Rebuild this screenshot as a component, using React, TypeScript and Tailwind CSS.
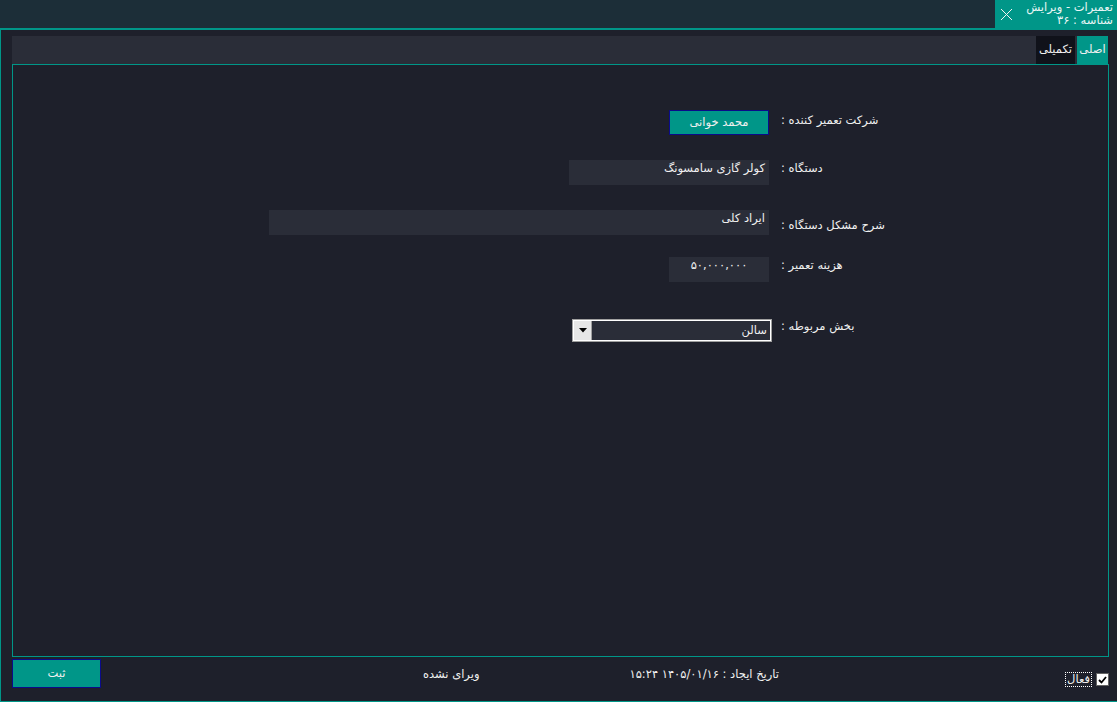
import React from 'react';

// فرم ویرایش تعمیرات
const teal = 'bg-[#009688]';

const Field = ({ width, children, className = '' }: { width: string; children?: React.ReactNode; className?: string }) => (
  <div dir="rtl" className={`${width} h-[25px] bg-[#2a2d38] px-[4px] pt-[1px] text-[11.5px] leading-[15px] text-[#f0f0f0] ${className}`}>
    {children}
  </div>
);

const Row = ({ top, labelTop, label, children }: { top: string; labelTop: string; label: string; children: React.ReactNode }) => (
  <div className={`flex items-start ${top}`}>
    <div className="w-[756px] flex justify-end">{children}</div>
    <div dir="rtl" className={`ml-[12px] ${labelTop} text-[11.5px] leading-[15px] text-[#f0f0f0] whitespace-nowrap`}>
      {label}
    </div>
  </div>
);

const App = () => {
  return (
    <div
      className="w-[1117px] h-[702px] flex flex-col bg-[#1e202b] overflow-hidden"
      style={{ fontFamily: '"DejaVu Sans", sans-serif' }}
    >
      {/* نوار عنوان */}
      <div className="h-[28px] flex justify-end bg-[#1c2e38] shrink-0">
        <div className={`${teal} w-[122px] h-full flex items-center justify-between pl-[5px] pr-[4px]`}>
          <svg width="13" height="13" viewBox="0 0 13 13" className="mt-[1px]">
            <path d="M1 1 L12 12 M12 1 L1 12" stroke="#f2f2f2" strokeWidth="1" fill="none" />
          </svg>
          <div dir="rtl" className="text-[11.5px] leading-[13px] text-[#eaf7f6] text-right">
            <div>تعمیرات - ویرایش</div>
            <div>شناسه : ۳۶</div>
          </div>
        </div>
      </div>
      <div className="h-[2px] bg-[#009688] shrink-0" />

      {/* بدنه */}
      <div className="flex-1 flex flex-col border-l border-b border-[#009688] pl-[11px] pt-[6px]">
        {/* تب ها */}
        <div className="w-[1096px] h-[28px] bg-[#2a2d38] flex justify-end">
          <div className="h-full px-[3px] bg-[#10121a] flex items-center text-[11.5px] text-[#f0f0f0]">تکمیلی</div>
          <div className={`${teal} h-full w-[31px] ml-[2px] flex items-center justify-center text-[11.5px] text-[#f0f0f0]`}>اصلی</div>
        </div>

        {/* محتوای تب */}
        <div className="w-[1097px] h-[593px] border border-[#009688] flex flex-col">
          <Row top="mt-[45px]" labelTop="mt-[3px]" label="شرکت تعمیر کننده :">
            <div className={`${teal} w-[100px] h-[25px] border border-[#0b0b8a] flex items-center justify-center text-[11.5px] text-[#f0f0f0]`}>
              محمد خوانی
            </div>
          </Row>
          <Row top="mt-[25px]" labelTop="mt-[1px]" label="دستگاه :">
            <Field width="w-[200px]">کولر گازی سامسونگ</Field>
          </Row>
          <Row top="mt-[25px]" labelTop="mt-[8px]" label="شرح مشکل دستگاه :">
            <Field width="w-[500px]">ایراد کلی</Field>
          </Row>
          <Row top="mt-[22px]" labelTop="mt-[1px]" label="هزینه تعمیر :">
            <Field width="w-[100px]" className="text-center">۵۰,۰۰۰,۰۰۰</Field>
          </Row>
          <Row top="mt-[37px]" labelTop="mt-[0px]" label="بخش مربوطه :">
            <div className="w-[200px] h-[23px] -mr-[3px] border border-[#a0a0a0] flex">
              <div className="flex-1 flex border border-white">
                <div className="w-[18px] bg-[#e6e6e6] border-r border-[#a0a0a0] flex items-center justify-center">
                  <svg width="8" height="5" viewBox="0 0 8 5">
                    <path d="M0 0 L8 0 L4 4.5 Z" fill="#000" />
                  </svg>
                </div>
                <div dir="rtl" className="flex-1 bg-[#2a2d38] px-[3px] text-[11.5px] leading-[19px] text-[#f0f0f0]">سالن</div>
              </div>
            </div>
          </Row>
        </div>

        {/* نوار پایین */}
        <div className="flex items-start pt-[2px] pr-[8px]">
          <div className={`${teal} w-[89px] h-[29px] border border-[#0b0b8a] flex items-center justify-center text-[11.5px] text-[#f0f0f0]`}>
            ثبت
          </div>
          <div dir="rtl" className="ml-[322px] mt-[8px] text-[11.5px] leading-[15px] text-[#f0f0f0] whitespace-nowrap">ویرای نشده</div>
          <div dir="rtl" className="ml-[150px] mt-[8px] text-[11.5px] leading-[15px] text-[#f0f0f0] whitespace-nowrap">
            تاریخ ایجاد : ۱۴۰۵/۰۱/۱۶ ۱۵:۲۴
          </div>
          <div className="ml-auto mt-[13px] flex items-center gap-[4px]">
            <div className="px-[1px] border border-dotted border-white text-[11.5px] leading-[13px] text-[#f0f0f0]">فعال</div>
            <div className="w-[13px] h-[13px] bg-[#646464] p-[1px]">
              <div className="w-full h-full bg-white flex items-center justify-center">
                <svg width="9" height="8" viewBox="0 0 9 8">
                  <path d="M1 4 L3.5 6.5 L8 1" stroke="#000" strokeWidth="1.8" fill="none" />
                </svg>
              </div>
            </div>
          </div>
        </div>
      </div>
    </div>
  );
};

export default App;
